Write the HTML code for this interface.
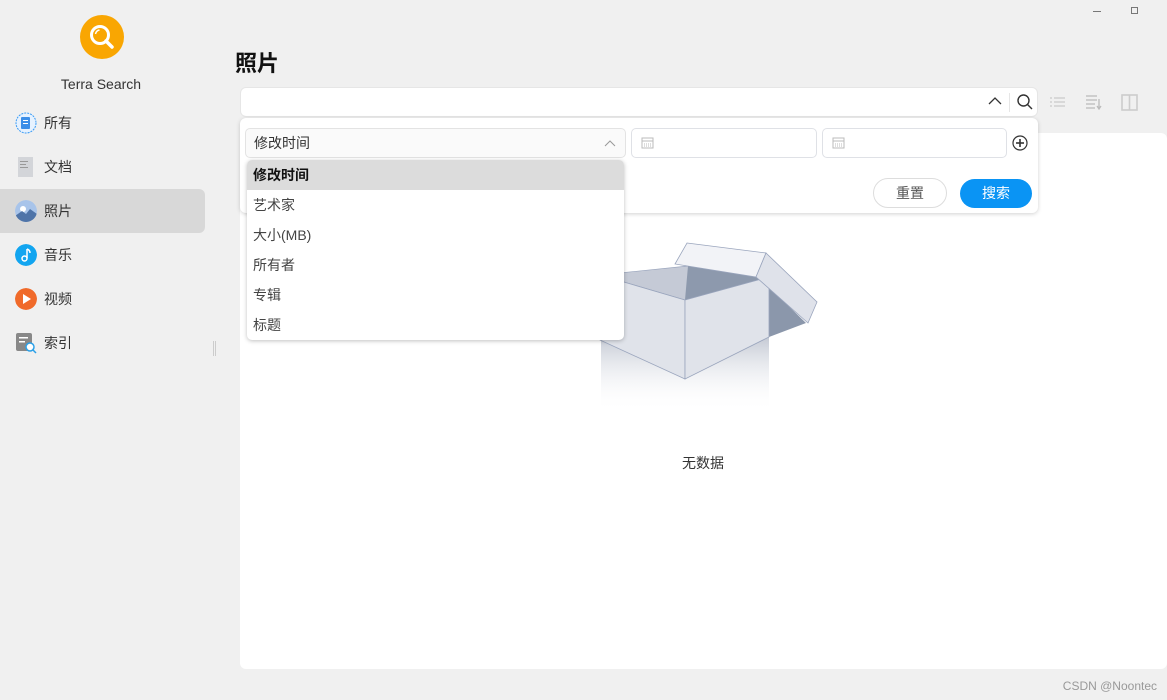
<!DOCTYPE html>
<html><head><meta charset="utf-8">
<style>
*{box-sizing:border-box;margin:0;padding:0}
body{width:1167px;height:700px;background:#f0f0f0;font-family:"Liberation Sans","Noto Sans CJK SC",sans-serif;position:relative;overflow:hidden;color:#333}
.abs{position:absolute}
.nav{position:absolute;left:0;width:205px;height:44px;display:flex;align-items:center;font-size:14px;color:#333}
.nav .ic{width:22px;height:22px;margin-left:15px;margin-right:7px;border-radius:50%}
.dd div{height:30px;line-height:30px;padding-left:6px;font-size:14px;color:#444}
</style></head><body>
<div class="abs" style="left:1093px;top:11px;width:8px;height:1px;background:#777"></div>
<div class="abs" style="left:1131px;top:7px;width:7px;height:7px;border:1.3px solid #777"></div>

<svg class="abs" style="left:80px;top:15px" width="44" height="44" viewBox="0 0 44 44"><circle cx="22" cy="22" r="22" fill="#f9a602"/><circle cx="20" cy="20" r="8.5" fill="none" stroke="#fff" stroke-width="3"/><line x1="26" y1="26" x2="32" y2="32" stroke="#fff" stroke-width="3.5" stroke-linecap="round"/><path d="M15.5 19a5 5 0 0 1 4-4" stroke="#fff" stroke-width="1.5" fill="none"/></svg>
<div class="abs" style="left:0;width:202px;top:76px;text-align:center;font-size:14px;color:#333">Terra Search</div>

<div class="nav" style="top:101px"><svg class="ic" viewBox="0 0 22 22" style="border-radius:0"><circle cx="11" cy="11" r="10" fill="#e6f2ff" stroke="#3b9cf5" stroke-dasharray="2 1"/><rect x="6" y="5" width="9" height="12" rx="1" fill="#3b8ee8"/><rect x="8" y="8" width="5" height="1" fill="#fff"/><rect x="8" y="11" width="5" height="1" fill="#fff"/></svg>所有</div>
<div class="nav" style="top:145px"><svg class="ic" viewBox="0 0 22 22" style="border-radius:0"><rect x="3" y="1" width="15" height="20" fill="#d3d5d9"/><rect x="5" y="5" width="8" height="1" fill="#999"/><rect x="5" y="8" width="6" height="1" fill="#999"/><rect x="5" y="11" width="8" height="1" fill="#999"/></svg>文档</div>
<div class="nav" style="top:189px;background:#d8d8d8;border-radius:0 6px 6px 0"><svg class="ic" viewBox="0 0 22 22"><circle cx="11" cy="11" r="11" fill="#a8c4ea"/><circle cx="8" cy="9" r="3" fill="#fff"/><path d="M0 16 L7 11 L11 14 L15 9 L22 14 L22 22 L0 22Z" fill="#4f74a8"/></svg>照片</div>
<div class="nav" style="top:233px"><svg class="ic" viewBox="0 0 22 22"><circle cx="11" cy="11" r="11" fill="#12a5f0"/><path d="M12 5v9" stroke="#fff" stroke-width="1.5"/><circle cx="9.5" cy="14.5" r="2.5" fill="none" stroke="#fff" stroke-width="1.5"/><path d="M12 5q3 1 3 4" stroke="#fff" stroke-width="1.5" fill="none"/></svg>音乐</div>
<div class="nav" style="top:277px"><svg class="ic" viewBox="0 0 22 22"><circle cx="11" cy="11" r="11" fill="#f06a2a"/><path d="M8 6 L16 11 L8 16Z" fill="#fff"/></svg>视频</div>
<div class="nav" style="top:321px"><svg class="ic" viewBox="0 0 22 22" style="border-radius:0"><rect x="1" y="1" width="16" height="18" rx="2" fill="#888"/><rect x="4" y="5" width="9" height="1.5" fill="#fff"/><rect x="4" y="9" width="6" height="1.5" fill="#fff"/><circle cx="15" cy="15" r="4" fill="#fff" stroke="#2aa0e8" stroke-width="1.5"/><line x1="18" y1="18" x2="21" y2="21" stroke="#2aa0e8" stroke-width="1.5"/></svg>索引</div>
<div class="abs" style="left:213px;top:341px;width:3px;height:15px;border-left:1px solid #ccc;border-right:1px solid #ccc"></div>

<div class="abs" style="left:235px;top:46px;font-size:22px;font-weight:bold;color:#111">照片</div>

<div class="abs" style="left:240px;top:133px;width:927px;height:536px;background:#fff;border-radius:6px"></div>

<div class="abs" style="left:240px;top:87px;width:798px;height:30px;background:#fff;border-radius:6px;border:1px solid #e6e6e6"></div>
<svg class="abs" style="left:988px;top:96px" width="14" height="10"><path d="M1 8 L7 2 L13 8" stroke="#333" stroke-width="1.3" fill="none"/></svg>
<div class="abs" style="left:1009px;top:93px;width:1px;height:19px;background:#e6e6e6"></div>
<svg class="abs" style="left:1016px;top:93px" width="18" height="18"><circle cx="7.5" cy="7.5" r="5.5" stroke="#333" stroke-width="1.4" fill="none"/><line x1="11.5" y1="11.5" x2="16" y2="16" stroke="#333" stroke-width="1.4"/></svg>
<svg class="abs" style="left:1050px;top:95px" width="16" height="14" stroke="#ccc" stroke-width="1.3"><line x1="0" y1="3" x2="2" y2="3"/><line x1="4" y1="3" x2="15" y2="3"/><line x1="0" y1="7" x2="2" y2="7"/><line x1="4" y1="7" x2="15" y2="7"/><line x1="0" y1="11" x2="2" y2="11"/><line x1="4" y1="11" x2="15" y2="11"/></svg>
<svg class="abs" style="left:1086px;top:94px" width="16" height="16" stroke="#bbb" stroke-width="1.3" fill="none"><line x1="0" y1="2" x2="11" y2="2"/><line x1="0" y1="6" x2="11" y2="6"/><line x1="0" y1="10" x2="9" y2="10"/><line x1="0" y1="14" x2="9" y2="14"/><path d="M13 5v10M11 12l2 3 2-3"/></svg>
<svg class="abs" style="left:1121px;top:94px" width="18" height="17" stroke="#ccc" stroke-width="1.6" fill="none"><rect x="1" y="1" width="15" height="15"/><line x1="8.5" y1="1" x2="8.5" y2="16"/></svg>

<div class="abs" style="left:240px;top:118px;width:798px;height:95px;background:#fff;border-radius:6px;box-shadow:0 1px 4px rgba(0,0,0,.18)"></div>
<div class="abs" style="left:245px;top:128px;width:381px;height:30px;background:#fafafa;border:1px solid #e3e3e3;border-radius:5px;font-size:14px;line-height:28px;padding-left:8px;color:#333">修改时间</div>
<svg class="abs" style="left:604px;top:139px" width="12" height="8"><path d="M1 7 L6 2 L11 7" stroke="#999" stroke-width="1" fill="none"/></svg>
<div class="abs" style="left:631px;top:128px;width:186px;height:30px;border:1px solid #dfe1e6;border-radius:5px"></div>
<div class="abs" style="left:822px;top:128px;width:185px;height:30px;border:1px solid #dfe1e6;border-radius:5px"></div>
<svg class="abs" style="left:641px;top:136px" width="13" height="13" stroke="#bbb" fill="none"><rect x="1" y="2" width="11" height="10"/><line x1="1" y1="5" x2="12" y2="5"/><line x1="3" y1="8" x2="10" y2="8" stroke-dasharray="1 1"/><line x1="3" y1="10" x2="10" y2="10" stroke-dasharray="1 1"/></svg>
<svg class="abs" style="left:832px;top:136px" width="13" height="13" stroke="#bbb" fill="none"><rect x="1" y="2" width="11" height="10"/><line x1="1" y1="5" x2="12" y2="5"/><line x1="3" y1="8" x2="10" y2="8" stroke-dasharray="1 1"/><line x1="3" y1="10" x2="10" y2="10" stroke-dasharray="1 1"/></svg>
<svg class="abs" style="left:1012px;top:135px" width="16" height="16" stroke="#333" stroke-width="1.2" fill="none"><circle cx="8" cy="8" r="7"/><line x1="8" y1="4" x2="8" y2="12" stroke-width="1.6"/><line x1="4" y1="8" x2="12" y2="8" stroke-width="1.6"/></svg>
<div class="abs" style="left:873px;top:178px;width:74px;height:30px;border:1px solid #ddd;border-radius:15px;text-align:center;line-height:28px;font-size:14px;color:#555">重置</div>
<div class="abs" style="left:960px;top:179px;width:72px;height:29px;background:#0a94f4;border-radius:15px;text-align:center;line-height:29px;font-size:14px;color:#fff">搜索</div>

<svg class="abs" style="left:590px;top:235px" width="240" height="185" viewBox="590 235 240 185">
<defs><linearGradient id="g" x1="0" y1="0" x2="0" y2="1"><stop offset="0" stop-color="#b9bfcc"/><stop offset="1" stop-color="#fff" stop-opacity="0"/></linearGradient></defs>
<rect x="601" y="330" width="168" height="82" fill="url(#g)"/>
<path d="M769 287 L806 323 L769 337Z" fill="#8b97ab"/>
<path d="M600 275 L688 266 L769 277 L685 300Z" fill="#c5cad6" stroke="#9aa5bd" stroke-width=".7"/>
<path d="M688 266 L685 300 L769 277Z" fill="#8d99ad"/>
<path d="M600 275 L685 300 L685 379 L600 340Z" fill="#e0e3ea" stroke="#9aa5bd" stroke-width=".8"/>
<path d="M685 300 L769 277 L769 337 L685 379Z" fill="#e0e3ea" stroke="#9aa5bd" stroke-width=".8"/>
<path d="M687 243 L766 253 L756 277 L675 264Z" fill="#f2f3f7" stroke="#9aa5bd" stroke-width=".8"/>
<path d="M766 253 L817 302 L808 323 L756 277Z" fill="#dfe2ea" stroke="#9aa5bd" stroke-width=".8"/>
</svg>
<div class="abs" style="left:640px;top:453px;width:126px;text-align:center;font-size:14px;color:#333">无数据</div>

<div class="abs dd" style="left:247px;top:160px;width:377px;height:180px;background:#fff;border-radius:5px;box-shadow:0 1px 4px rgba(0,0,0,.25);overflow:hidden">
<div style="background:#dcdcdc;font-weight:bold;color:#111">修改时间</div>
<div>艺术家</div><div>大小(MB)</div><div>所有者</div><div>专辑</div><div>标题</div>
</div>

<div class="abs" style="right:10px;top:679px;font-size:12px;color:#999">CSDN @Noontec</div>
</body></html>
